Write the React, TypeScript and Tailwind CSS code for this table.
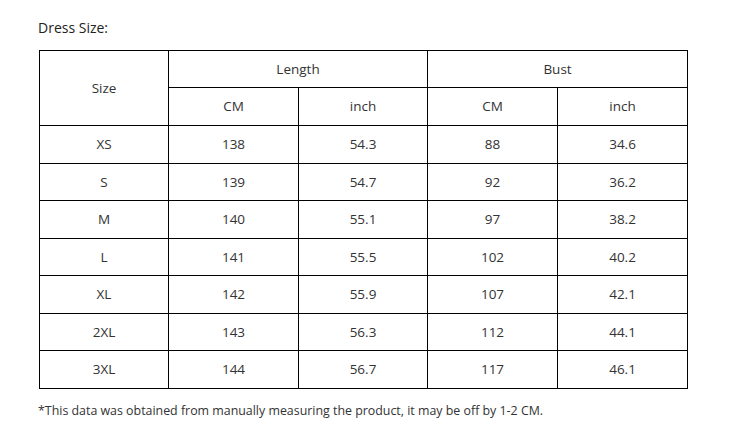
import React from 'react';

const rows = [
    ['XS', '138', '54.3', '88', '34.6'],
    ['S', '139', '54.7', '92', '36.2'],
    ['M', '140', '55.1', '97', '38.2'],
    ['L', '141', '55.5', '102', '40.2'],
    ['XL', '142', '55.9', '107', '42.1'],
    ['2XL', '143', '56.3', '112', '44.1'],
    ['3XL', '144', '56.7', '117', '46.1']
];

function App() {
    const cell = 'border border-black text-center align-middle p-0';
    return (
        <div className="w-[743px] h-[447px] bg-white text-[#333] font-['Open_Sans','Noto_Sans',sans-serif]">
            <div className="pt-[18px] pl-[38px] text-[14px] leading-[20px] text-[#222]">Dress Size:</div>
            <div className="pt-[12px] pl-[39px]">
                <table className="table-fixed border-collapse w-[648px] text-[13.5px]">
                    <colgroup>
                        <col className="w-[129px]" />
                        <col className="w-[130px]" />
                        <col className="w-[129px]" />
                        <col className="w-[130px]" />
                        <col className="w-[130px]" />
                    </colgroup>
                    <thead>
                        <tr className="h-[37px]">
                            <th rowSpan={2} className={`${cell} font-normal`}>Size</th>
                            <th colSpan={2} className={`${cell} font-normal`}>Length</th>
                            <th colSpan={2} className={`${cell} font-normal`}>Bust</th>
                        </tr>
                        <tr className="h-[38px]">
                            <th className={`${cell} font-normal`}>CM</th>
                            <th className={`${cell} font-normal`}>inch</th>
                            <th className={`${cell} font-normal`}>CM</th>
                            <th className={`${cell} font-normal`}>inch</th>
                        </tr>
                    </thead>
                    <tbody>
                        {rows.map((r) => (
                            <tr key={r[0]} className="h-[37.5px]">
                                {r.map((v, i) => (
                                    <td key={i} className={cell}>{v}</td>
                                ))}
                            </tr>
                        ))}
                    </tbody>
                </table>
            </div>
            <div className="pt-[13px] pl-[38px] text-[12.4px] leading-[18px] text-[#333]">
                *This data was obtained from manually measuring the product, it may be off by 1-2 CM.
            </div>
        </div>
    );
}

export default App;
